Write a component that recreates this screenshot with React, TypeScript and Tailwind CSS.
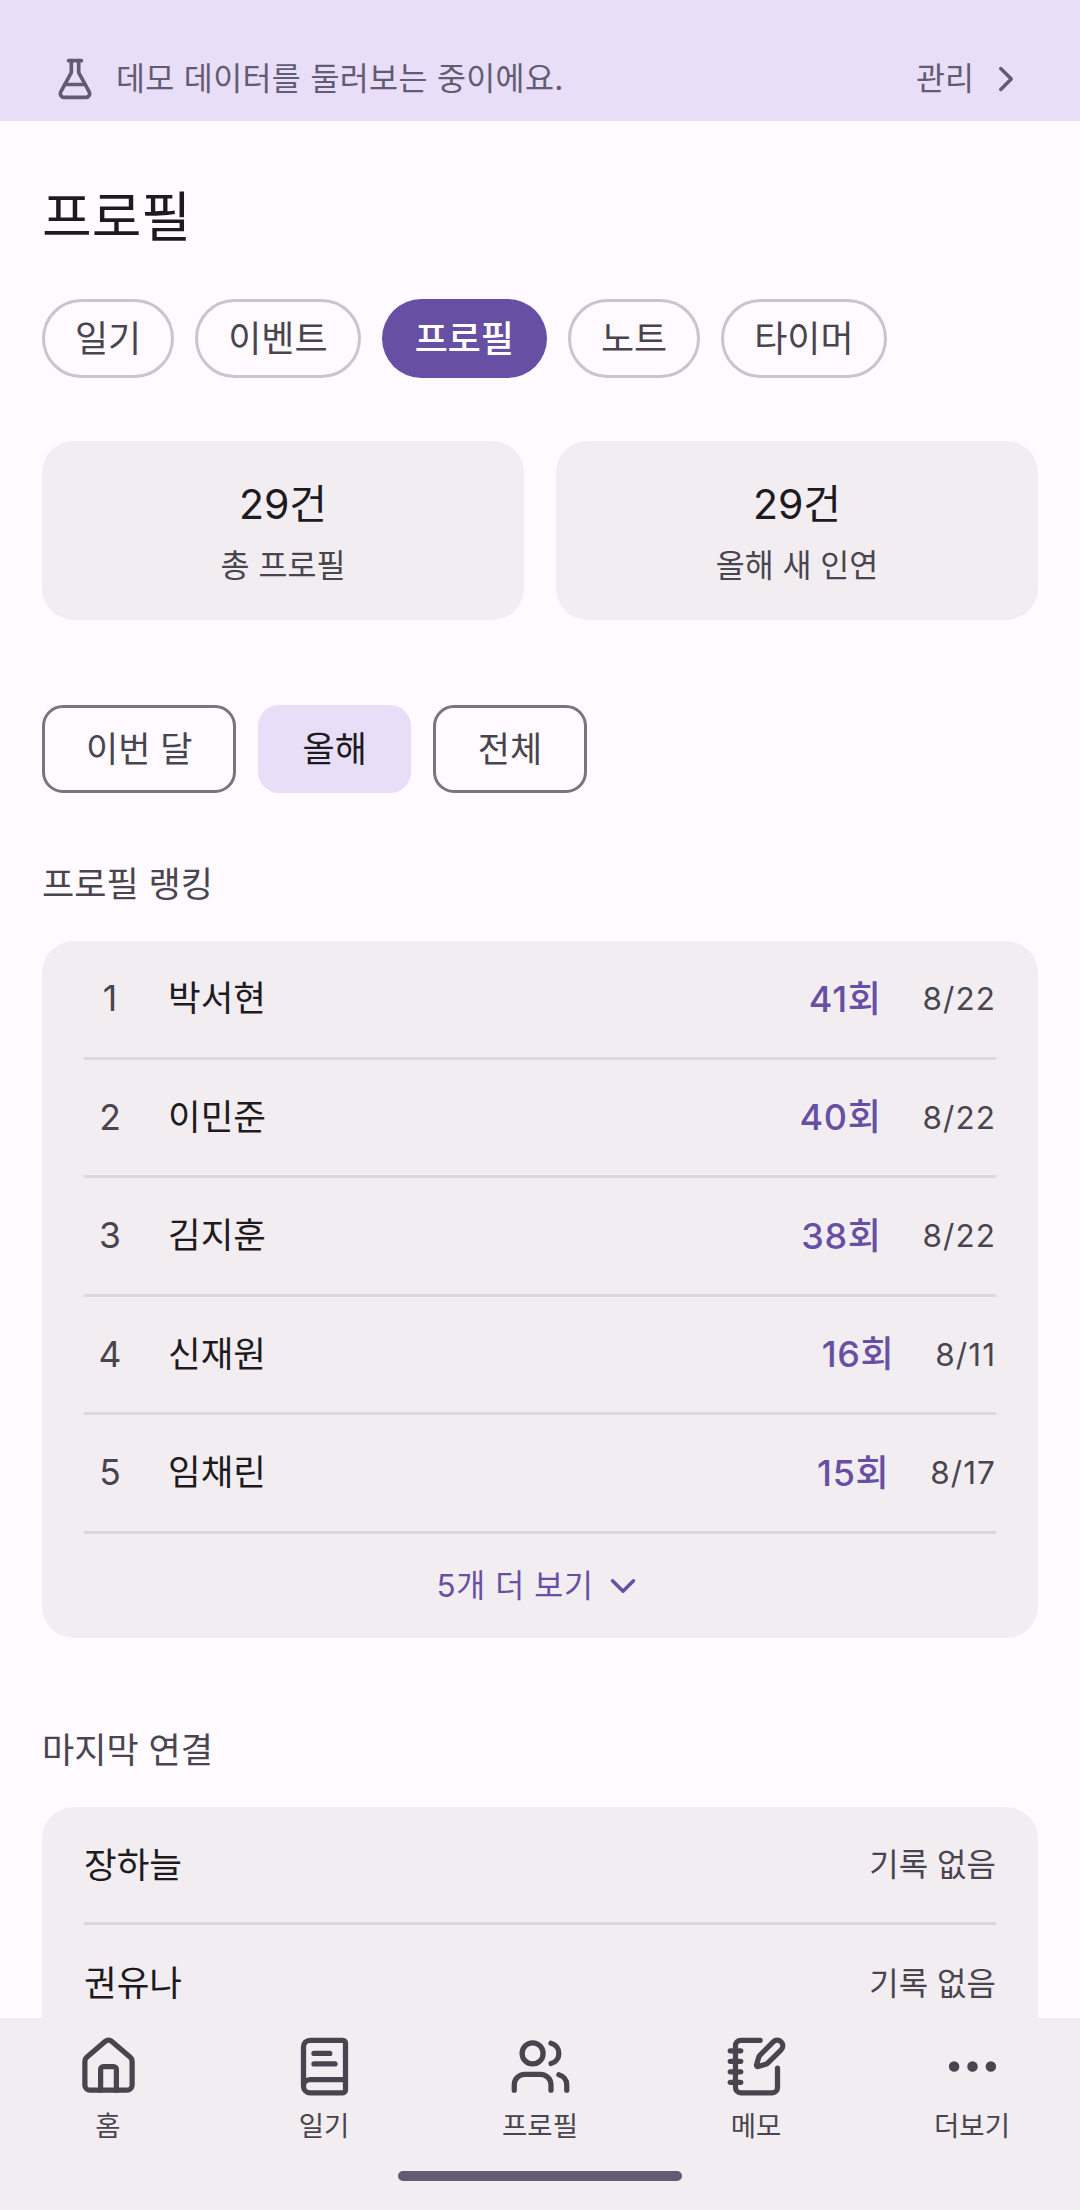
import { BookText, ChevronDown, ChevronRight, Ellipsis, FlaskConical, House, NotebookPen, Users } from 'lucide-react';

const font = { fontFamily: 'Inter, "Noto Sans CJK KR", sans-serif' };

const chips = [
  { label: '일기', active: false },
  { label: '이벤트', active: false },
  { label: '프로필', active: true },
  { label: '노트', active: false },
  { label: '타이머', active: false },
];

const ranks = [
  { name: '박서현', count: '41회', date: '8/22' },
  { name: '이민준', count: '40회', date: '8/22' },
  { name: '김지훈', count: '38회', date: '8/22' },
  { name: '신재원', count: '16회', date: '8/11' },
  { name: '임채린', count: '15회', date: '8/17' },
];

const navItems = [
  { label: '홈', icon: House },
  { label: '일기', icon: BookText },
  { label: '프로필', icon: Users },
  { label: '메모', icon: NotebookPen },
  { label: '더보기', icon: Ellipsis },
];

function StatCard({ value, label }: { value: string; label: string }) {
  return (
    <div className="flex h-[179px] flex-col items-center rounded-[32px] bg-[#f2edf1] pt-[40px]">
      <div className="text-[41px] leading-[46px] text-[#1d1b20]">{value}</div>
      <div className="mt-[19px] text-[31.5px] leading-[40px] text-[#49454f]">{label}</div>
    </div>
  );
}

export default function App() {
  return (
    <div style={font} className="flex h-[2210px] w-[1080px] flex-col overflow-hidden bg-[#fefaff]">
      <div className="flex h-[121px] shrink-0 items-center bg-[#e8def8] pl-[53px] pr-[53px] pt-[36px] text-[#625b71]">
        <FlaskConical size={44} strokeWidth={2} />
        <span className="ml-[19px] flex-1 text-[31.5px] tracking-[0.35px]">데모 데이터를 둘러보는 중이에요.</span>
        <span className="text-[31.5px]">관리</span>
        <ChevronRight size={42} strokeWidth={2} className="ml-[11px]" />
      </div>

      <main className="min-h-0 flex-1 overflow-hidden px-[42px]">
        <h1 className="mt-[63px] text-[54px] font-normal leading-[68px] text-[#1d1b20]">프로필</h1>

        <div className="mt-[47px] flex gap-[21px]">
          {chips.map((chip) => (
            <div
              key={chip.label}
              className={
                chip.active
                  ? 'flex h-[79px] items-center rounded-full bg-[#6750a4] px-[33px] text-[36px] font-medium text-white'
                  : 'flex h-[79px] items-center rounded-full border-[3px] border-[#cac4d0] px-[30px] text-[36px] text-[#49454f]'
              }
            >
              {chip.label}
            </div>
          ))}
        </div>

        <div className="mt-[63px] grid grid-cols-2 gap-[32px]">
          <StatCard value="29건" label="총 프로필" />
          <StatCard value="29건" label="올해 새 인연" />
        </div>

        <div className="mt-[85px] flex gap-[22px]">
          <div className="flex h-[88px] items-center rounded-[21px] border-[3px] border-[#79747e] px-[41px] text-[35px] text-[#49454f]">이번 달</div>
          <div className="flex h-[88px] items-center rounded-[21px] bg-[#e8def8] px-[44px] text-[35px] text-[#1d1b20]">올해</div>
          <div className="flex h-[88px] items-center rounded-[21px] border-[3px] border-[#79747e] px-[42px] text-[35px] text-[#49454f]">전체</div>
        </div>

        <h2 className="mt-[66px] text-[35px] font-normal leading-[50px] text-[#49454f]">프로필 랭킹</h2>

        <section className="mt-[32px] rounded-[32px] bg-[#f2edf1] px-[42px]">
          {ranks.map((rank, i) => (
            <div key={rank.name} className="flex h-[118.5px] items-center border-b-[3px] border-[#ddd8dc] text-[35.5px]">
              <span className="w-[52px] text-center text-[#49454f]">{i + 1}</span>
              <span className="ml-[32px] flex-1 text-[#1d1b20]">{rank.name}</span>
              <span className="text-[36px] font-medium tracking-[0.65px] text-[#6750a4]">{rank.count}</span>
              <span className="ml-[41px] text-[31.5px] tracking-[1.05px] text-[#49454f]">{rank.date}</span>
            </div>
          ))}
          <div className="flex h-[104px] items-center justify-center text-[#6750a4]">
            <span className="text-[31.5px] tracking-[0.6px]">5개 더 보기</span>
            <ChevronDown size={42} strokeWidth={2} className="ml-[8px]" />
          </div>
        </section>

        <h2 className="mt-[87px] text-[35px] font-normal leading-[50px] text-[#49454f]">마지막 연결</h2>

        <section className="mt-[32px] rounded-[32px] bg-[#f2edf1] px-[42px]">
          {['장하늘', '권유나'].map((name) => (
            <div key={name} className="flex h-[118.5px] items-center justify-between border-b-[3px] border-[#ddd8dc] pt-[2px]">
              <span className="text-[35.5px] text-[#1d1b20]">{name}</span>
              <span className="text-[32px] text-[#49454f]">기록 없음</span>
            </div>
          ))}
        </section>
      </main>

      <nav className="h-[192px] shrink-0 bg-[#f2edf1]">
        <div className="grid grid-cols-5 pt-[17px]">
          {navItems.map((item) => {
            const Icon = item.icon;
            return (
              <div key={item.label} className="flex flex-col items-center text-[#49454f]">
                <Icon size={63} strokeWidth={2} />
                <span className="mt-[8px] text-[27.5px] leading-[40px]">{item.label}</span>
              </div>
            );
          })}
        </div>
        <div className="mx-auto mt-[25px] h-[10px] w-[284px] rounded-full bg-[#625b71]" />
      </nav>
    </div>
  );
}
